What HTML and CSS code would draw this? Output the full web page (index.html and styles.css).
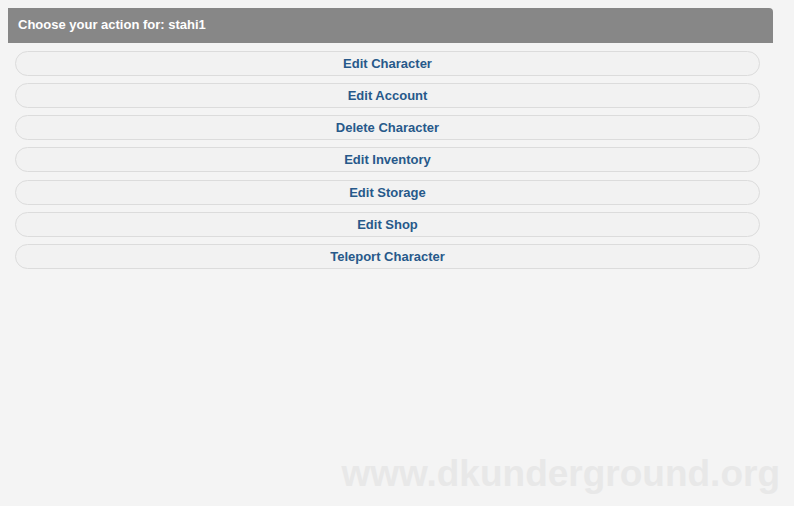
FILE: index.html
```html
<!DOCTYPE html>
<html>
<head>
<meta charset="utf-8">
<link rel="stylesheet" href="styles.css">
</head>
<body>
<div class="panel">
  <div class="panel-head">Choose your action for: stahi1</div>
  <div class="actions">
    <a class="btn">Edit Character</a>
    <a class="btn">Edit Account</a>
    <a class="btn">Delete Character</a>
    <a class="btn">Edit Inventory</a>
    <a class="btn">Edit Storage</a>
    <a class="btn">Edit Shop</a>
    <a class="btn">Teleport Character</a>
  </div>
</div>
<div class="watermark">www.dkunderground.org</div>
</body>
</html>
```
FILE: styles.css
```css
html, body {
  margin: 0;
  padding: 0;
  background: #f4f4f4;
  height: 100%;
  overflow: hidden;
}
body {
  padding: 8px 21px 0 8px;
  box-sizing: border-box;
  font-family: "Liberation Sans", Arial, sans-serif;
  position: relative;
}
.panel-head {
  background: #878787;
  color: #ffffff;
  font-weight: bold;
  font-size: 13px;
  height: 35px;
  line-height: 34px;
  padding-left: 10px;
  border-radius: 0 4px 0 0;
}
.actions {
  display: flex;
  flex-direction: column;
  gap: 7.17px;
  padding: 8px 13px 0 7px;
}
.btn {
  display: block;
  height: 25px;
  box-sizing: border-box;
  border: 1px solid #dcdcdc;
  border-radius: 13px;
  background: #f2f2f2;
  color: #27598a;
  font-weight: bold;
  font-size: 13px;
  line-height: 23px;
  text-align: center;
}
.watermark {
  position: absolute;
  right: 14px;
  bottom: 10px;
  font-size: 37px;
  font-weight: bold;
  color: #e8e8e8;
  line-height: 44px;
}
```
